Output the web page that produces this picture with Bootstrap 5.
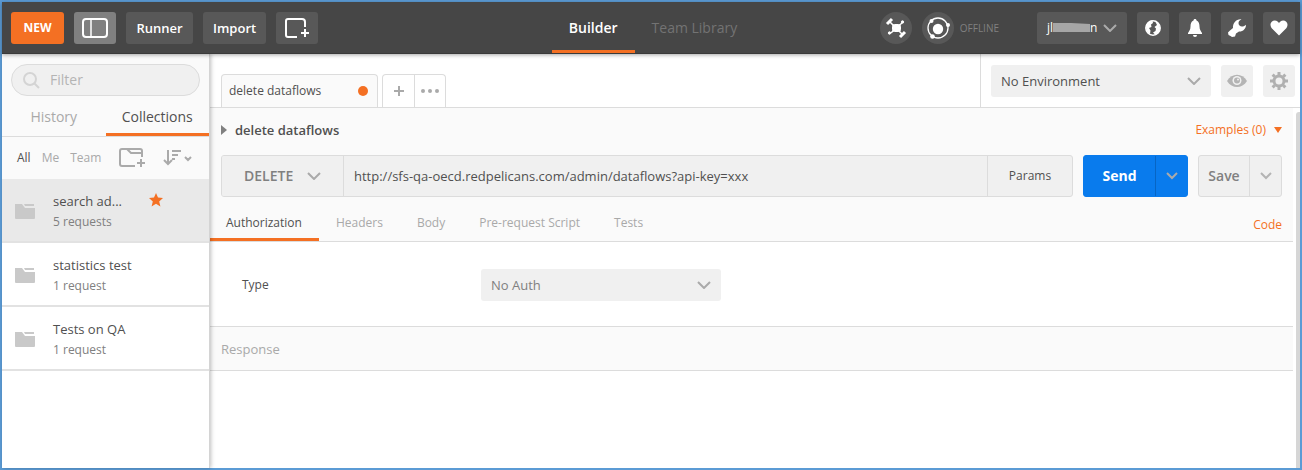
<!DOCTYPE html>
<html lang="en">
<head>
<meta charset="utf-8">
<meta name="viewport" content="width=device-width, initial-scale=1">
<title>API request builder</title>
<link href="https://cdn.jsdelivr.net/npm/bootstrap@5.3.0/dist/css/bootstrap.min.css" rel="stylesheet">
<style>
:root{--accent:#f47023;--line:#dcdcdc;--panel:#fafafa;--field:#f0f0f0;--dim:#a9a9a9;--ink:#505050}
body{font-family:"Open Sans",sans-serif;font-size:12px;line-height:16px;color:var(--ink);background:#fff}
a{text-decoration:none;color:inherit}
svg{display:block;flex:none}
.app{min-height:100vh;border:2px solid #5b9bd5}
.topbar{display:grid;grid-template-columns:1fr auto 1fr;background:#464646;padding:0 5px 0 9px;height:52px;border-bottom:1px solid #3a3a3a;box-shadow:0 1px 4px rgba(0,0,0,.35);position:relative;z-index:2}
.tool{height:32px;min-width:32px;border:0;border-radius:3px;background:#585858;color:#fff;font-size:13px;font-weight:600;line-height:16px;padding:0 10px;display:flex;align-items:center;justify-content:center}
.tool-icon{padding:0}
.tool-wide{width:42px;padding:0}
.tool-new{background:var(--accent);font-size:12px;font-weight:700;width:53px}
.tool-runner{width:67px}
.tool-on{background:#808080}
.tool-round{border-radius:50%;width:32px}
.user{width:90px;font-size:12px;font-weight:400;justify-content:space-between}
.main-tab{display:flex;align-items:center;padding:3px 17px 0;font-size:14px;color:#737373;border-bottom:3px solid transparent}
.main-tab.active{color:#fff;font-weight:600;border-color:var(--accent)}
.sync{gap:6px;margin-right:28px}
.offline{font-size:10px;color:#808080}
.sidebar{width:208px;border-right:1px solid #d4d4d4;box-shadow:1px 0 4px rgba(0,0,0,.25);position:relative;z-index:1}
.side-head{background:var(--panel)}
.search-wrap{padding:10px 9px 9px}
.search{height:32px;border:1px solid var(--line);border-radius:16px;background:var(--field);padding:0 10px}
.search input{font-size:14px;border:0;background:none;outline:0;min-width:0;color:var(--ink)}
.search input::placeholder{color:#b4b4b4}
.side-tabs{height:32px;border-bottom:1px solid var(--line);font-size:14px}
.side-tabs a{width:50%;text-align:center;padding-top:4px;color:var(--dim);border-bottom:3px solid transparent}
.side-tabs a.active{color:var(--ink);border-color:var(--accent)}
.scopes{height:42px;padding:0 17px 0 15px}
.scopes nav{gap:11px;color:var(--dim)}
.scopes nav .active{color:var(--ink)}
.coll{height:64px;padding:1px 13px 0;border-bottom:2px solid #e2e2e2;gap:18px}
.coll.active{background:#e9e9e9}
.coll-text{gap:5px;padding-top:2px}
.coll-name{font-size:13px}
.coll-star{margin-left:27px}
.coll-sub{color:#808080}
.strip{height:54px;border-bottom:1px solid var(--line);padding-left:11px}
.req-tab{height:33px;border:1px solid var(--line);border-bottom:0;border-radius:4px 4px 0 0}
.req-tab.active{width:157px;padding:0 9px 0 7px;background:var(--panel)}
.tab-btn{width:31px;border:0;background:none;padding:0;display:flex;align-items:center;justify-content:center}
.tab-btn + .tab-btn{border-left:1px solid var(--line)}
.env{border-left:1px solid var(--line);padding:0 5px 0 10px;gap:10px}
.pick{appearance:none;border:0;border-radius:3px;height:32px;padding:0 10px;color:var(--ink);font-size:13px;background:var(--field) url("data:image/svg+xml,%3Csvg xmlns='http://www.w3.org/2000/svg' width='14' height='8'%3E%3Cpath d='M1 1l6 6 6-6' fill='none' stroke='%23aaa' stroke-width='2'/%3E%3C/svg%3E") no-repeat right 10px center}
.pick-env{width:220px}
.pick-auth{width:240px;color:#808080}
.pick-method{height:40px;width:122px;padding:0 22px;font-size:14px;font-weight:600;color:#808080;background-position:right 22px center;border-right:1px solid var(--line);border-radius:0}
.side-btn{width:32px;height:32px;border:0;border-radius:3px;background:var(--field);padding:0;display:flex;align-items:center;justify-content:center}
.builder{background:var(--panel);border-bottom:1px solid var(--line);padding:0 11px}
.title-row{height:43px}
.title-name{font-size:13px;font-weight:600}
.url-row{gap:10px;padding-top:4px}
.box{height:42px;border:1px solid var(--line);border-radius:3px;background:var(--field);overflow:hidden}
.url{border:0;background:none;outline:0;padding:0 10px;font-size:13px;color:var(--ink);min-width:0}
.box button{border:0;background:none;padding:0;display:flex;align-items:center;justify-content:center;color:#808080}
.box button + button,.url + button{border-left:1px solid var(--line)!important}
.box .params{width:85px;color:var(--ink)}
.big{font-size:14px;font-weight:600}
.box .wide-send{width:71px}
.box .wide-save{width:50px}
.box .more{width:32px}
.box.send{background:#097bed;border-color:#097bed}
.box.send button{color:#fff;border-color:#0765c4!important}
.box.send .big{font-weight:700}
.sub-tabs{height:44px;margin-left:-11px}
.sub-tabs .sub{padding:18px 17px 0;color:var(--dim);border-bottom:3px solid transparent}
.sub-tabs .sub.active{color:var(--ink);border-color:var(--accent);padding-left:16px}
.code{padding-top:20px}
.orange{color:var(--accent)}
.auth{height:84px;padding:2px 0 0 32px}
.auth label{width:239px}
.response{height:45px;background:var(--panel);border:solid var(--line);border-width:1px 0;padding-left:11px;font-size:13px;color:var(--dim)}
.scrollbar-track{width:7px;padding:4px 0 0 3px}
.scroll-thumb{background:#d6d6d6;border-radius:3px 0 0 0}
</style>
</head>
<body>
<div class="app d-flex flex-column">
<header class="topbar">
  <div class="d-flex align-items-center" style="gap:10px">
    <button class="tool tool-new">NEW</button>
    <button class="tool tool-wide tool-on" aria-label="Toggle sidebar"><svg width="26" height="20" fill="none" stroke="#fff" stroke-width="2"><rect x="1" y="1" width="24" height="18" rx="3"/><path d="M9 1v18" stroke-width="1.500"/></svg></button>
    <button class="tool tool-runner">Runner</button>
    <button class="tool">Import</button>
    <button class="tool tool-wide" aria-label="New window"><svg width="26" height="20" fill="none" stroke="#fff" stroke-width="2"><path d="M13 19H4a2 2 0 0 1-2-2V3a2 2 0 0 1 2-2h14a3 3 0 0 1 3 3v5M21 11v8M17 15h8"/></svg></button>
  </div>
  <nav class="d-flex">
    <a class="main-tab active" href="#">Builder</a>
    <a class="main-tab" href="#">Team Library</a>
  </nav>
  <div class="d-flex align-items-center justify-content-end" style="gap:10px">
    <button class="tool tool-icon tool-round" aria-label="Interceptor"><svg width="22" height="22" viewBox="0 0 22 22" stroke="#fff" fill="#fff"><rect x="7.500" y="7.500" width="8" height="7" rx="2"/><path d="M11 11L5 5M11 11l6-5M11 11l-5 5M11 11l6 6" stroke-width="1.500"/><path d="M2 7l5-5M15 20l5-5" stroke-width="3"/><circle cx="17.500" cy="5" r="1.200"/><circle cx="4.500" cy="16" r="1.200"/></svg></button>
    <div class="sync d-flex align-items-center">
      <button class="tool tool-icon tool-round" aria-label="Sync"><svg width="24" height="24" viewBox="0 0 24 24" fill="#fff"><circle cx="12" cy="12" r="10" fill="none" stroke="#fff" stroke-width="1.300"/><circle cx="12" cy="13" r="5.200"/><circle cx="5.500" cy="5" r="2"/><circle cx="22" cy="9" r="2"/><circle cx="6.500" cy="20.500" r="2.300"/></svg></button>
      <span class="offline">OFFLINE</span>
    </div>
    <button class="tool user"><span class="d-flex align-items-center">jl<svg width="37" height="11"><path d="M0 1h18l19 1v8L18 10H0z" fill="#a6a6a6"/></svg>n</span><svg width="14" height="8" fill="none" stroke="#aaa" stroke-width="2"><path d="M1 1l6 6 6-6"/></svg></button>
    <button class="tool tool-icon" aria-label="Web"><svg width="18" height="18" viewBox="0 0 18 18"><circle cx="9" cy="9" r="7.200" fill="none" stroke="#fff" stroke-width="1.500"/><path d="M2 8c0-4 3-6.500 6.500-6.500L9 4 7 5.500 7.500 8 5 9l1.500 2.500L6 15C3.500 14 2 11 2 8zM11 2c3 1 5 3.500 5 7s-2 6-5 6.500L9 13.500l2.500-1.500.500-2.500-1.500-1.500L13 6z" fill="#fff"/></svg></button>
    <button class="tool tool-icon" aria-label="Notifications"><svg width="16" height="18" viewBox="0 0 16 18" fill="#fff"><path d="M8 0c1 0 1.500.7 1.500 1.500C12 2.500 12.500 5 12.500 7.500 12.500 11 14 12 15 14v1H1v-1c1-2 2.500-3 2.500-6.500C3.500 5 4 2.500 6.500 1.500 6.500.7 7 0 8 0zM6 16h4a2 2 0 0 1-4 0z"/></svg></button>
    <button class="tool tool-icon" aria-label="Settings"><svg width="20" height="20" viewBox="0 0 20 20" fill="#fff"><path d="M14.500 1.200c-1.500 1-3 2-3 3.800 0 2 1.500 3.500 3.500 3.500 1.500 0 2.800-.8 4-1.800 0 4-3 7-7 6.800L9 15.500l-1 3-3 .500-1.500-1-2-1-.500-2.500L3 12.500 6 10C5.500 5 9.500.500 14.500 1.200z"/></svg></button>
    <button class="tool tool-icon" aria-label="Favourites"><svg width="18" height="16" viewBox="0 0 18 16" fill="#fff"><path d="M9 15.500L1.500 8C-1 4 1.500 .500 4.800.500 7 .500 8.500 2 9 3.200 9.500 2 11 .500 13.200.500 16.500.500 19 4 16.500 8z"/></svg></button>
  </div>
</header>
<div class="d-flex flex-grow-1">
  <aside class="sidebar flex-shrink-0">
    <div class="side-head">
      <div class="search-wrap">
        <label class="search d-flex align-items-center gap-2"><svg width="18" height="18" fill="none" stroke="#d4d4d4" stroke-width="2"><circle cx="8" cy="8" r="6"/><path d="M12 12l5 5"/></svg><input type="text" placeholder="Filter" aria-label="Filter"></label>
      </div>
      <nav class="side-tabs d-flex"><a href="#">History</a><a class="active" href="#">Collections</a></nav>
      <div class="scopes d-flex align-items-center">
        <nav class="d-flex flex-grow-1"><a class="active" href="#">All</a><a href="#">Me</a><a href="#">Team</a></nav>
        <a href="#" aria-label="New folder"><svg width="27" height="20" fill="none" stroke="#aaa"><path d="M16 18H3a2 2 0 0 1-2-2V3a2 2 0 0 1 2-2h18a2 2 0 0 1 2 2v6M22 11v8M18 15h8" stroke-width="2"/><path d="M8 1l4 4h10" stroke-width="2"/></svg></a>
        <a href="#" class="ms-3" aria-label="Sort"><svg width="30" height="18" fill="none" stroke="#aaa" stroke-width="2"><path d="M6 1v14M2 11l4 4 4-4M10 2h9M10 6h6M10 10h3M23 8l3 3 3-3"/></svg></a>
      </div>
    </div>
    <a href="#" class="coll active d-flex align-items-center"><svg width="20" height="16" fill="#c9c9c9"><path d="M0 1h7l3 4h10v10a1 1 0 0 1-1 1H1a1 1 0 0 1-1-1zM9 1h10v2h-9z"/></svg>
      <span class="coll-text d-flex flex-column"><span class="coll-name d-flex">search ad...<svg width="14" height="14" viewBox="0 0 14 14" class="coll-star" fill="#f47023"><path d="M7 0l2 4.600 5 .500-3.800 3.300L11.400 13.500 7 10.800 2.600 13.500l1.200-5.100L0 5.100l5-.500z"/></svg></span><span class="coll-sub">5 requests</span></span></a>
    <a href="#" class="coll d-flex align-items-center"><svg width="20" height="16" fill="#c9c9c9"><path d="M0 1h7l3 4h10v10a1 1 0 0 1-1 1H1a1 1 0 0 1-1-1zM9 1h10v2h-9z"/></svg>
      <span class="coll-text d-flex flex-column"><span class="coll-name">statistics test</span><span class="coll-sub">1 request</span></span></a>
    <a href="#" class="coll d-flex align-items-center"><svg width="20" height="16" fill="#c9c9c9"><path d="M0 1h7l3 4h10v10a1 1 0 0 1-1 1H1a1 1 0 0 1-1-1zM9 1h10v2h-9z"/></svg>
      <span class="coll-text d-flex flex-column"><span class="coll-name">Tests on QA</span><span class="coll-sub">1 request</span></span></a>
  </aside>
  <main class="flex-grow-1 d-flex flex-column">
    <div class="strip d-flex">
      <div class="d-flex align-items-end flex-grow-1 gap-1">
        <a href="#" class="req-tab active d-flex align-items-center justify-content-between">delete dataflows<svg width="10" height="10"><circle cx="5" cy="5" r="5" fill="#f47023"/></svg></a>
        <div class="req-tab d-flex">
          <button class="tab-btn" aria-label="New tab"><svg width="10" height="10" stroke="#aaa" stroke-width="2"><path d="M5 0v10M0 5h10"/></svg></button>
          <button class="tab-btn" aria-label="More"><svg width="18" height="4" fill="#aaa"><circle cx="2" cy="2" r="2"/><circle cx="9" cy="2" r="2"/><circle cx="16" cy="2" r="2"/></svg></button>
        </div>
      </div>
      <div class="env d-flex align-items-center">
        <select class="pick pick-env" aria-label="Environment"><option>No Environment</option></select>
        <button class="side-btn" aria-label="Quick look"><svg width="20" height="14" viewBox="0 0 20 14"><path d="M0 7C5-1.500 15-1.500 20 7 15 15 5 15 0 7z" fill="#b4b4b4"/><circle cx="10" cy="6.500" r="4.500" fill="#f0f0f0"/><circle cx="10" cy="6.500" r="3" fill="#b4b4b4"/><circle cx="11" cy="5.500" r="1" fill="#f0f0f0"/></svg></button>
        <button class="side-btn" aria-label="Manage environments"><svg width="18" height="18" viewBox="-9 -9 18 18" fill="none" stroke="#b0b0b0"><circle r="5" stroke-width="3"/><path d="M0-9v3M0 6v3M-9 0h3M6 0h3M-6.400-6.400l2.200 2.200M4.200 4.200l2.200 2.200M-6.400 6.400l2.200-2.200M4.200-4.200l2.200-2.200" stroke-width="3"/></svg></button>
      </div>
    </div>
    <div class="d-flex flex-grow-1">
      <div class="flex-grow-1">
        <section class="builder">
          <div class="title-row d-flex align-items-center">
            <svg width="6" height="10" fill="#808080"><path d="M0 0l6 5-6 5z"/></svg>
            <span class="title-name ms-2 flex-grow-1">delete dataflows</span>
            <a href="#" class="orange d-flex align-items-center gap-2">Examples (0)<svg width="8" height="6" fill="#f47023"><path d="M0 0h8L4 6z"/></svg></a>
          </div>
          <div class="url-row d-flex">
            <div class="box d-flex flex-grow-1">
              <select class="pick pick-method" aria-label="Method"><option>DELETE</option></select>
              <input class="url flex-grow-1" type="text" aria-label="Request URL" value="http://sfs-qa-oecd.redpelicans.com/admin/dataflows?api-key=xxx">
              <button class="params">Params</button>
            </div>
            <div class="box send d-flex"><button class="big wide-send">Send</button><button class="more" aria-label="Send options"><svg width="12" height="8" fill="none" stroke="#aaa" stroke-width="2"><path d="M1 1l5 5 5-5"/></svg></button></div>
            <div class="box d-flex"><button class="big wide-save">Save</button><button class="more" aria-label="Save options"><svg width="12" height="8" fill="none" stroke="#b4b4b4" stroke-width="2"><path d="M1 1l5 5 5-5"/></svg></button></div>
          </div>
          <nav class="sub-tabs d-flex">
            <a class="sub active" href="#">Authorization</a><a class="sub" href="#">Headers</a><a class="sub" href="#">Body</a><a class="sub" href="#">Pre-request Script</a><a class="sub" href="#">Tests</a>
            <a class="code orange ms-auto" href="#">Code</a>
          </nav>
        </section>
        <section class="auth d-flex align-items-center">
          <label for="authType">Type</label>
          <select id="authType" class="pick pick-auth"><option>No Auth</option></select>
        </section>
        <section class="response d-flex align-items-center">Response</section>
      </div>
      <div class="scrollbar-track d-flex"><div class="scroll-thumb flex-grow-1"></div></div>
    </div>
  </main>
</div>
</div>
<script src="https://cdn.jsdelivr.net/npm/bootstrap@5.3.0/dist/js/bootstrap.bundle.min.js"></script>
</body>
</html>
